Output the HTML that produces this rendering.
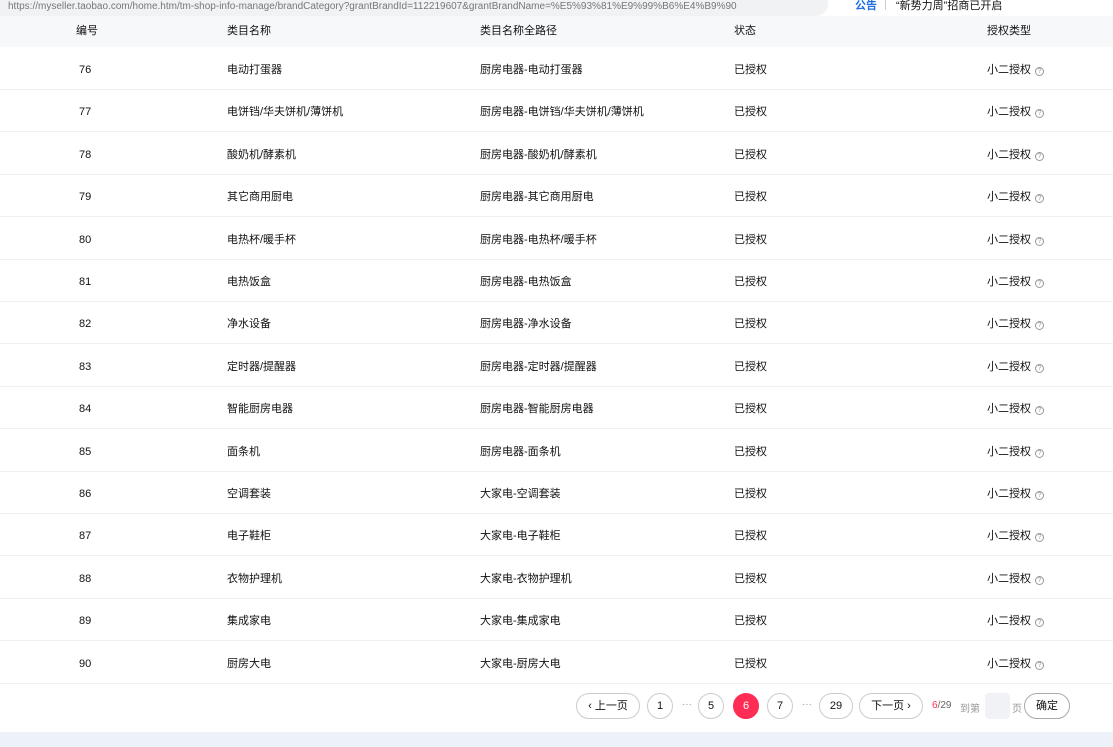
<!DOCTYPE html>
<html><head><meta charset="utf-8"><style>
*{margin:0;padding:0;box-sizing:border-box}
body{width:1113px;height:747px;overflow:hidden;background:#fff;font-family:"Liberation Sans","Noto Sans CJK SC",sans-serif;font-size:11px;color:#111;position:relative}
.url{position:absolute;left:-10px;top:-10px;width:838px;height:26px;background:#f1f2f4;border-radius:0 0 12px 0;color:#777;font-size:10px;padding:10px 0 0 18px;line-height:14px}
.notice{position:absolute;left:855px;top:-1px;font-size:11px;line-height:14px}
.notice b{color:#1f6fe0;font-weight:bold}
.notice i{display:inline-block;width:1px;height:10px;background:#ccc;margin:0 10px 0 8px;vertical-align:-1px}
.hd{position:absolute;left:0;top:16px;width:1113px;height:31px;background:#f7f8fa}
.row{position:absolute;left:0;width:1113px;height:43px;border-bottom:1px solid #eef0f3}
.c{position:absolute;top:0;white-space:nowrap}
.hd .c{line-height:31px}
.row .c{line-height:43px;top:2px}
.q{display:inline-block;width:9px;height:9px;border:1px solid #999;border-radius:50%;font-size:7px;line-height:7px;text-align:center;color:#999;margin-left:4px;vertical-align:0}
.pg{position:absolute;top:693px;height:26px;border:1px solid #ccc;border-radius:13px;text-align:center;line-height:24px;font-size:11px;background:#fff}
.dots{position:absolute;top:699px;color:#999;font-size:10px}
.bot{position:absolute;left:0;top:732px;width:1113px;height:15px;background:#edf1f8}
</style></head><body>
<div class="url">https://myseller.taobao.com/home.htm/tm-shop-info-manage/brandCategory?grantBrandId=112219607&amp;grantBrandName=%E5%93%81%E9%99%B6%E4%B9%90</div>
<div class="notice"><b>公告</b><i></i>“新势力周”招商已开启</div>
<div class="hd"><span class="c" style="left:76px">编号</span><span class="c" style="left:227px">类目名称</span><span class="c" style="left:480px">类目名称全路径</span><span class="c" style="left:734px">状态</span><span class="c" style="left:987px">授权类型</span></div>
<div id="rows"></div>
<script>
var d=[[76,"电动打蛋器","厨房电器-电动打蛋器"],[77,"电饼铛/华夫饼机/薄饼机","厨房电器-电饼铛/华夫饼机/薄饼机"],[78,"酸奶机/酵素机","厨房电器-酸奶机/酵素机"],[79,"其它商用厨电","厨房电器-其它商用厨电"],[80,"电热杯/暖手杯","厨房电器-电热杯/暖手杯"],[81,"电热饭盒","厨房电器-电热饭盒"],[82,"净水设备","厨房电器-净水设备"],[83,"定时器/提醒器","厨房电器-定时器/提醒器"],[84,"智能厨房电器","厨房电器-智能厨房电器"],[85,"面条机","厨房电器-面条机"],[86,"空调套装","大家电-空调套装"],[87,"电子鞋柜","大家电-电子鞋柜"],[88,"衣物护理机","大家电-衣物护理机"],[89,"集成家电","大家电-集成家电"],[90,"厨房大电","大家电-厨房大电"]];
var h="";d.forEach(function(r,i){var t=47+i*42.4;h+='<div class="row" style="top:'+t+'px"><span class="c" style="left:79px">'+r[0]+'</span><span class="c" style="left:227px">'+r[1]+'</span><span class="c" style="left:480px">'+r[2]+'</span><span class="c" style="left:734px">已授权</span><span class="c" style="left:987px">小二授权<span class="q">?</span></span></div>'});
document.getElementById("rows").innerHTML=h;
</script>
<div class="pg" style="left:576px;width:64px">‹ 上一页</div>
<div class="pg" style="left:647px;width:26px">1</div>
<div class="dots" style="left:682px">···</div>
<div class="pg" style="left:698px;width:26px">5</div>
<div class="pg" style="left:733px;width:26px;background:#ff2d55;border-color:#ff2d55;color:#fff">6</div>
<div class="pg" style="left:767px;width:26px">7</div>
<div class="dots" style="left:802px">···</div>
<div class="pg" style="left:819px;width:34px">29</div>
<div class="pg" style="left:859px;width:64px">下一页 ›</div>
<div style="position:absolute;left:932px;top:700px;font-size:10px;color:#666"><span style="color:#ff2d55">6</span>/29</div>
<div style="position:absolute;left:960px;top:700px;font-size:10px;color:#999">到第</div>
<div style="position:absolute;left:985px;top:693px;width:25px;height:26px;background:#f1f2f5;border-radius:4px"></div>
<div style="position:absolute;left:1012px;top:700px;font-size:10px;color:#999">页</div>
<div class="pg" style="left:1024px;width:46px;border-color:#aaa">确定</div>
<div class="bot"></div>
</body></html>
